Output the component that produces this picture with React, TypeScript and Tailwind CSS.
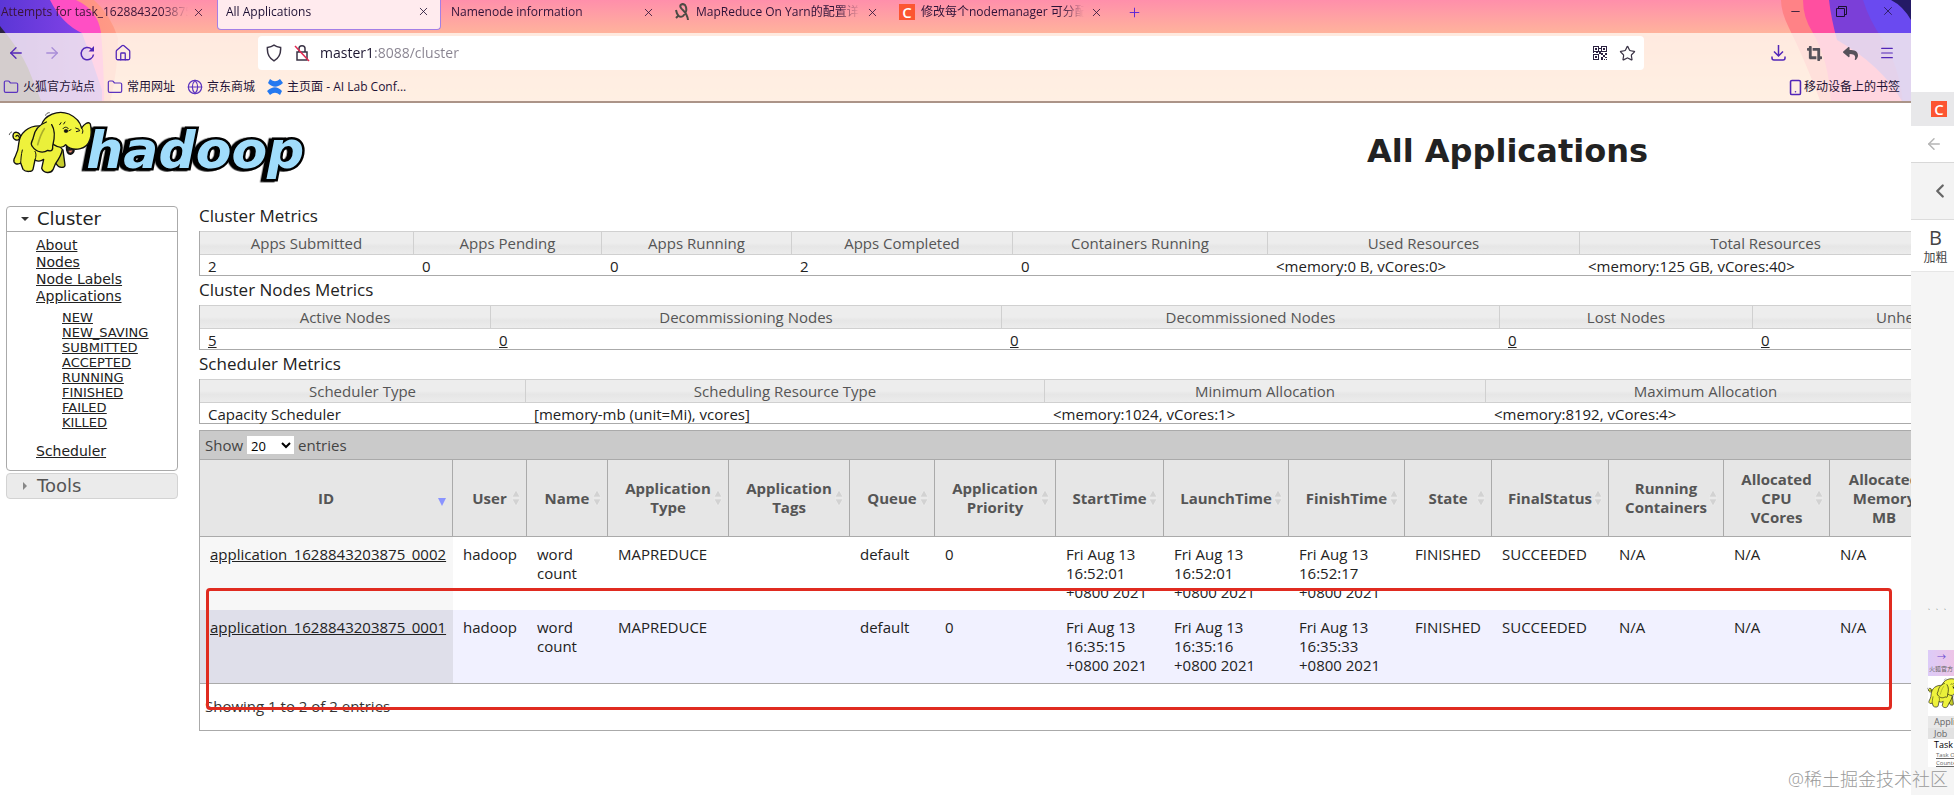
import React from 'react';
import { ArrowLeft, ArrowRight, ChevronLeft, Folder, Globe, House, Menu, Minus, Plus, Smartphone, Star, X } from 'lucide-react';
import { FaCropAlt, FaReply } from 'react-icons/fa';

interface MetricColumn {
  label: string;
  value: string;
  width: number;
  link?: boolean;
}

interface AppColumn {
  label: string;
  width: number;
  sorted?: boolean;
}

const clusterMetrics: MetricColumn[] = [
  { label: 'Apps Submitted', value: '2', width: 214 },
  { label: 'Apps Pending', value: '0', width: 188 },
  { label: 'Apps Running', value: '0', width: 190 },
  { label: 'Apps Completed', value: '2', width: 221 },
  { label: 'Containers Running', value: '0', width: 255 },
  { label: 'Used Resources', value: '<memory:0 B, vCores:0>', width: 312 },
  { label: 'Total Resources', value: '<memory:125 GB, vCores:40>', width: 372 },
];

const nodeMetrics: MetricColumn[] = [
  { label: 'Active Nodes', value: '5', width: 291, link: true },
  { label: 'Decommissioning Nodes', value: '0', width: 511, link: true },
  { label: 'Decommissioned Nodes', value: '0', width: 498, link: true },
  { label: 'Lost Nodes', value: '0', width: 253, link: true },
  { label: 'Unhealthy Nodes', value: '0', width: 368, link: true },
];

const schedulerMetrics: MetricColumn[] = [
  { label: 'Scheduler Type', value: 'Capacity Scheduler', width: 326 },
  { label: 'Scheduling Resource Type', value: '[memory-mb (unit=Mi), vcores]', width: 519 },
  { label: 'Minimum Allocation', value: '<memory:1024, vCores:1>', width: 441 },
  { label: 'Maximum Allocation', value: '<memory:8192, vCores:4>', width: 440 },
];

const appColumns: AppColumn[] = [
  { label: 'ID', width: 253, sorted: true },
  { label: 'User', width: 74 },
  { label: 'Name', width: 81 },
  { label: 'Application Type', width: 121 },
  { label: 'Application Tags', width: 121 },
  { label: 'Queue', width: 85 },
  { label: 'Application Priority', width: 121 },
  { label: 'StartTime', width: 108 },
  { label: 'LaunchTime', width: 125 },
  { label: 'FinishTime', width: 116 },
  { label: 'State', width: 87 },
  { label: 'FinalStatus', width: 117 },
  { label: 'Running Containers', width: 115 },
  { label: 'Allocated CPU VCores', width: 106 },
  { label: 'Allocated Memory MB', width: 109 },
];

const appRows: string[][] = [
  [
    'application_1628843203875_0002', 'hadoop', 'word count', 'MAPREDUCE', '', 'default', '0',
    'Fri Aug 13 16:52:01 +0800 2021', 'Fri Aug 13 16:52:01 +0800 2021', 'Fri Aug 13 16:52:17 +0800 2021',
    'FINISHED', 'SUCCEEDED', 'N/A', 'N/A', 'N/A',
  ],
  [
    'application_1628843203875_0001', 'hadoop', 'word count', 'MAPREDUCE', '', 'default', '0',
    'Fri Aug 13 16:35:15 +0800 2021', 'Fri Aug 13 16:35:16 +0800 2021', 'Fri Aug 13 16:35:33 +0800 2021',
    'FINISHED', 'SUCCEEDED', 'N/A', 'N/A', 'N/A',
  ],
];

const appStates = ['NEW', 'NEW_SAVING', 'SUBMITTED', 'ACCEPTED', 'RUNNING', 'FINISHED', 'FAILED', 'KILLED'];

const Elephant = () => (
  <g stroke="#111" strokeWidth="4" strokeLinejoin="round" strokeLinecap="round">
    <path d="M62 112C58 94 40 92 38 106C37 118 50 124 57 117C60 110 50 102 47 109" fill="#edf23c" />
    <path d="M27 104C28 99 31 97 34 96M136 46C137 41 141 38 147 38" fill="none" strokeWidth="2" />
    <path d="M150 140L168 192C176 206 192 204 194 196L188 150Z" fill="#c6cc2c" />
    <path
      d="M122 78C84 76 58 98 55 132C54 158 45 166 41 178C38 190 50 196 61 189L68 208C76 217 96 216 98 208L104 180C114 186 122 184 130 178L124 205C130 221 152 221 158 209L166 190C176 176 184 162 186 148Z"
      fill="#eef23c"
    />
    <path d="M66 150C62 165 62 178 61 189M104 180C108 168 108 160 104 154" fill="none" strokeWidth="3" />
    <path d="M198 140C198 150 200 162 211 163C220 160 222 152 221 146Z" fill="#222" />
    <path d="M204 152C206 160 214 160 217 151Z" fill="#f28a70" strokeWidth="1" />
    <path
      d="M124 74C132 46 172 28 206 42C232 54 240 68 244 84C250 74 264 62 270 72C277 104 270 140 240 146C222 150 206 146 196 134C188 146 172 142 160 134Z"
      fill="#f2f63e"
    />
    <path d="M244 84C248 90 249 94 246 100" fill="none" strokeWidth="3" />
    <path
      d="M138 66C112 76 102 94 99 112C98 122 88 128 95 138C110 161 132 158 142 151C156 156 158 148 157 138C164 112 166 92 154 74"
      fill="#eaf03a"
    />
    <path d="M132 86C122 100 116 120 112 134" fill="none" stroke="#a9ae2a" strokeWidth="5" />
    <path d="M188 86C192 80 200 80 204 86M206 92L212 89M226 84L236 88M228 95L238 92M178 74L182 68M190 72L194 66" fill="none" strokeWidth="3" />
    <ellipse cx="197" cy="93" rx="6" ry="5" fill="#111" strokeWidth="1" />
  </g>
);

const HadoopLogo = () => (
  <svg viewBox="20 12 912 240" className="h-20 w-[304px] shrink-0" role="img" aria-label="hadoop">
    <text
      x="258"
      y="204"
      fontFamily="DejaVu Sans"
      fontWeight="bold"
      fontStyle="italic"
      fontSize="156"
      fill="#a0dcfb"
      stroke="#000"
      strokeWidth="15"
      strokeLinejoin="miter"
      className="drop-shadow-[-10px_2px_0_#000] [paint-order:stroke]"
    >
      hadoop
    </text>
    <Elephant />
  </svg>
);

const ChromeBackdrop = () => (
  <div className="absolute inset-0 overflow-hidden bg-[linear-gradient(#ff8fab_0,#ffb39c_33px,#ffcfae_103px)]">
    <svg className="absolute top-0 left-0" width="160" height="103" aria-hidden="true">
      <defs>
        <linearGradient id="violet" x1="0" y1="0" x2="1" y2="0">
          <stop offset="0" stopColor="#5b36d6" />
          <stop offset="1" stopColor="#8b45ea" />
        </linearGradient>
        <linearGradient id="orange" x1="0" y1="0" x2="1" y2="0">
          <stop offset="0" stopColor="#ff7a80" />
          <stop offset="1" stopColor="#ff9c86" />
        </linearGradient>
      </defs>
      <path d="M0 0H94Q110 14 118 38Q118 70 110 103H0Z" fill="url(#orange)" />
      <path d="M0 0H76Q98 10 101 33Q104 66 104 103H0Z" fill="#ff4fc4" />
      <path d="M0 0H50Q62 24 82 33Q92 60 102 90V103H0Z" fill="url(#violet)" />
      <path d="M0 26Q20 50 28 68L42 103H0Z" fill="#2c2340" />
    </svg>
    <svg className="absolute top-0 right-0" width="140" height="103" aria-hidden="true">
      <path d="M10 0H140V103H50Q34 60 18 28Q10 12 10 0Z" fill="#ff8286" />
      <path d="M32 0H140V103H60Q58 60 42 33Q32 18 32 0Z" fill="#ff4fa0" />
      <path d="M58 0H140V103H132Q112 66 66 40Q60 18 58 0Z" fill="#7b3fd8" />
      <path d="M92 0H140V103H132Q128 66 112 40Q98 20 92 0Z" fill="#6a4af0" />
      <path d="M120 0H140V20Q132 6 120 0Z" fill="#241a66" />
    </svg>
    <div className="relative mt-[33px] h-[68px] bg-[#fff7f0]/80" />
  </div>
);

interface TabProps {
  title: string;
  icon?: React.ReactNode;
  active?: boolean;
  first?: boolean;
}

const BrowserTab: React.FC<TabProps> = ({ title, icon, active, first }) => (
  <div
    className={
      active
        ? 'flex h-[30px] w-56 items-center gap-2 rounded-b border border-t-0 border-[#a37fe6] bg-[#ffebee] pr-2.5 pb-1.5 pl-2 text-[#1c0f33]'
        : first
          ? 'flex h-6 w-[217px] items-center gap-1 pr-3 pl-px text-[#3a1437]'
          : 'flex h-6 w-56 items-center gap-1.5 pr-2.5 pl-2.5 text-[#2d1238]'
    }
  >
    {icon}
    <span className="min-w-0 flex-1 overflow-hidden whitespace-nowrap [mask-image:linear-gradient(90deg,#000_86%,transparent)]">
      {title}
    </span>
    <button type="button" aria-label="Close tab">
      <X size={13} strokeWidth={1.5} />
    </button>
  </div>
);

const CsdnIcon = () => (
  <span className="flex size-4 shrink-0 items-center justify-center bg-[#fc5531] text-[15px] leading-4 font-semibold text-white">C</span>
);

const QrIcon = () => (
  <svg width="14" height="14" viewBox="0 0 14 14" fill="#2b2140" shapeRendering="crispEdges" aria-hidden="true">
    <path fillRule="evenodd" d="M0 0h6v6H0zM1 1v4h4V1zM8 0h6v6H8zM9 1v4h4V1zM0 8h6v6H0zM1 9v4h4V9z" />
    <path d="M2 2h2v2H2zM10 2h2v2h-2zM2 10h2v2H2zM6 2h2v1H6zM6 5h2v3H6zM8 7h2v2H8zM12 7h2v2h-2zM10 9h2v2h-2zM8 11h2v3H8zM12 11h2v1h-2zM11 13h1v1h-1zM13 13h1v1h-1zM0 6h1v1H0zM3 6h2v1H3z" />
  </svg>
);

const BrowserChrome = () => (
  <header className="relative border-b-2 border-[#ab9488] text-xs">
    <ChromeBackdrop />
    <div className="relative flex h-[33px] items-start">
      <BrowserTab first title="Attempts for task_1628843203875" />
      <BrowserTab active title="All Applications" />
      <BrowserTab title="Namenode information" />
      <BrowserTab
        title="MapReduce On Yarn的配置详"
        icon={
          <svg width="15" height="18" viewBox="0 0 15 18" fill="none" stroke="#4d4a44" strokeWidth="2" aria-hidden="true">
            <path d="M1 7C2 13 5 15 8 13C12 10 12 5 10 2C7 0 4 2 6 5C8 8 12 9 13 17M4 12L1 15" />
          </svg>
        }
      />
      <BrowserTab title="修改每个nodemanager 可分配" icon={<CsdnIcon />} />
      <button type="button" aria-label="New tab" className="ml-3.5 flex h-6 items-center text-[#5a24d6]">
        <Plus size={15} strokeWidth={1.5} />
      </button>
      <div className="mr-4 ml-auto flex h-[22px] items-center gap-[34px] text-[#1a1030]">
        <button type="button" aria-label="Minimize"><Minus size={13} strokeWidth={1.5} /></button>
        <button type="button" aria-label="Restore">
          <svg width="11" height="11" viewBox="0 0 11 11" fill="none" stroke="currentColor" aria-hidden="true">
            <path d="M.5 2.5h8v8h-8zM2.5 2.5v-2h8v8h-2" />
          </svg>
        </button>
        <button type="button" aria-label="Close"><X size={14} strokeWidth={1.2} /></button>
      </div>
    </div>

    <div className="relative flex h-10 items-center pr-4 pl-[7px] text-[#5226b8]">
      <div className="flex w-[251px] items-center gap-[18px]">
        <button type="button" aria-label="Back"><ArrowLeft size={18} strokeWidth={1.7} /></button>
        <button type="button" aria-label="Forward" className="opacity-40"><ArrowRight size={18} strokeWidth={1.7} /></button>
        <button type="button" aria-label="Reload">
          <svg width="17" height="17" viewBox="0 0 17 17" fill="none" stroke="currentColor" strokeWidth="1.5" aria-hidden="true">
            <path d="M14.5 9.5A6.2 6.2 0 1 1 12.5 4" />
            <path d="M15 1v5.5H9.5z" fill="currentColor" stroke="none" />
          </svg>
        </button>
        <button type="button" aria-label="Home"><House size={18} strokeWidth={1.7} /></button>
      </div>
      <div className="flex h-[34px] flex-1 items-center rounded bg-white pr-2 pl-2 text-[#3a3345]">
        <svg width="16" height="18" viewBox="0 0 16 18" fill="none" stroke="currentColor" strokeWidth="1.5" aria-hidden="true">
          <path d="M8 1.2C10 2.6 12.4 3.2 14.6 3.4C15 9 13 14 8 16.8C3 14 1 9 1.4 3.4C3.6 3.2 6 2.6 8 1.2Z" />
        </svg>
        <svg className="ml-3" width="16" height="18" viewBox="0 0 16 18" fill="none" stroke="currentColor" strokeWidth="1.5" aria-hidden="true">
          <path d="M3 8h10v8H3zM5 8V4.500C5 .8 11 .8 11 4.500V8" />
          <path d="M1 2L15 17" stroke="#e22850" />
        </svg>
        <input
          type="text"
          aria-label="Address"
          defaultValue="master1:8088/cluster"
          className="ml-2.5 min-w-0 flex-1 bg-[linear-gradient(90deg,#1c1530_54px,#87828f_54px)] bg-clip-text text-sm text-transparent outline-none"
        />
        <button type="button" aria-label="QR code"><QrIcon /></button>
        <button type="button" aria-label="Bookmark" className="ml-3"><Star size={17} strokeWidth={1.7} /></button>
      </div>
      <div className="ml-[127px] flex items-center gap-[21px]">
        <button type="button" aria-label="Downloads">
          <svg width="15" height="16" viewBox="0 0 15 16" fill="none" stroke="currentColor" strokeWidth="1.5" aria-hidden="true">
            <path d="M7.500 0V11M3 6.500L7.500 11L12 6.500M1 11.500V13Q1 15 3 15H12Q14 15 14 13V11.500" />
          </svg>
        </button>
        <button type="button" aria-label="Crop"><FaCropAlt size={15} color="#55515a" /></button>
        <button type="button" aria-label="Undo"><FaReply size={15} color="#55515a" /></button>
        <button type="button" aria-label="Menu"><Menu size={16} strokeWidth={1.8} /></button>
      </div>
    </div>

    <nav className="relative flex h-7 items-center gap-3 pr-[11px] pl-[3px] text-[#1e1236]">
      <a href="#official" className="flex items-center gap-1"><Folder size={16} strokeWidth={1.8} color="#5b33bf" />火狐官方站点</a>
      <a href="#common" className="flex items-center gap-1"><Folder size={16} strokeWidth={1.8} color="#5b33bf" />常用网址</a>
      <a href="#jd" className="flex items-center gap-1"><Globe size={16} strokeWidth={1.8} color="#5b33bf" />京东商城</a>
      <a href="#lab" className="flex items-center gap-1">
        <svg width="16" height="16" viewBox="0 0 16 16" fill="#2479f0" aria-hidden="true">
          <path d="M1 4L3 0C7 3 9 3 13 0L16 4C10 9 6 9 1 4Z" />
          <path d="M15 12L13 16C9 13 7 13 3 16L0 12C6 7 10 7 15 12Z" />
        </svg>
        主页面 - AI Lab Conf...
      </a>
      <a href="#mobile" className="ml-auto flex items-center"><Smartphone size={17} strokeWidth={2.2} color="#5226b8" />移动设备上的书签</a>
    </nav>
  </header>
);

const Sidebar = () => (
  <aside className="w-[172px] shrink-0 font-['DejaVu_Sans',sans-serif] text-[#222]">
    <div className="rounded border border-[#aaa] bg-white">
      <h3 className="flex h-[25px] items-center gap-2 border-b border-[#aaa] pl-3.5 text-lg">
        <svg width="8" height="4" viewBox="0 0 8 4" fill="#333" aria-hidden="true"><path d="M0 0h8L4 4z" /></svg>
        Cluster
      </h3>
      <ul className="pt-[5px] pb-2.5 pl-[29px] text-sm leading-[17px] underline">
        <li><a href="#about">About</a></li>
        <li><a href="#nodes">Nodes</a></li>
        <li><a href="#nodelabels">Node Labels</a></li>
        <li>
          <a href="#apps">Applications</a>
          <ul className="mt-[5px] mb-[13px] pl-[26px] text-[13px] leading-[15px] underline">
            {appStates.map(state => (
              <li key={state}><a href={`#apps/${state}`}>{state}</a></li>
            ))}
          </ul>
        </li>
        <li><a href="#scheduler">Scheduler</a></li>
      </ul>
    </div>
    <h3 className="mt-0.5 flex h-[26px] items-center gap-2.5 rounded border border-[#d3d3d3] bg-[#ebebeb] pl-4 text-lg text-[#555]">
      <svg width="4" height="8" viewBox="0 0 4 8" fill="#888" aria-hidden="true"><path d="M0 0v8l4-4z" /></svg>
      Tools
    </h3>
  </aside>
);

const MetricsTable: React.FC<{ title: string; columns: MetricColumn[] }> = ({ title, columns }) => (
  <section>
    <h3 className="h-[29px] text-[17px] leading-7 text-[#222]">{title}</h3>
    <table className="w-max table-fixed border-separate border-spacing-0 border-b border-l border-[#aaa]">
      <colgroup>
        {columns.map(col => <col key={col.label} style={{ width: col.width }} />)}
      </colgroup>
      <thead>
        <tr>
          {columns.map(col => (
            <th
              key={col.label}
              className="h-6 border-y border-r border-[#d0d0d0] bg-[linear-gradient(#ededed_50%,#e6e6e6_65%,#ececec)] p-0 leading-5 font-normal text-[#555]"
            >
              {col.label}
            </th>
          ))}
        </tr>
      </thead>
      <tbody>
        <tr>
          {columns.map(col => (
            <td key={col.label} className="px-2 pt-0.5 pb-0 leading-[18px] text-[#222]">
              {col.link ? <a href="#nodes" className="underline">{col.value}</a> : col.value}
            </td>
          ))}
        </tr>
      </tbody>
    </table>
  </section>
);

const SortIcon = ({ sorted }: { sorted?: boolean }) => (
  <svg width="8" height="18" viewBox="0 0 8 18" aria-hidden="true" className="shrink-0">
    {sorted ? (
      <path d="M0 9h8L4 17z" fill="#8a94ff" />
    ) : (
      <path d="M4 1L8 8H0zM4 17L0 10h8z" fill="#d2d2d2" stroke="#f2f2f2" strokeWidth=".5" />
    )}
  </svg>
);

const ApplicationsTable = () => (
  <section className="mt-1.5 w-max min-w-full border-y border-l border-[#aaa] text-[#222]">
    <div className="flex h-7 items-center gap-1 bg-[#cacaca] pl-[5px] text-[#444]">
      <label htmlFor="length">Show</label>
      <select id="length" defaultValue="20" className="h-[18px] w-[47px] bg-white text-[13px] text-black">
        <option>20</option>
        <option>50</option>
        <option>100</option>
      </select>
      <span>entries</span>
    </div>
    <table className="w-max table-fixed border-separate border-spacing-0 leading-[19px]">
      <colgroup>
        {appColumns.map(col => <col key={col.label} style={{ width: col.width }} />)}
      </colgroup>
      <thead>
        <tr>
          {appColumns.map(col => (
            <th key={col.label} className="h-[78px] border-y border-r border-[#aaa] bg-[#e6e6e6] px-1.5 py-0 font-bold text-[#555]">
              <div className="flex items-center">
                <span className="flex-1 pl-2 text-center">{col.label}</span>
                <SortIcon sorted={col.sorted} />
              </div>
            </th>
          ))}
        </tr>
      </thead>
      <tbody>
        {appRows.map((row, rowIdx) => (
          <tr key={row[0]} className={rowIdx % 2 ? 'bg-[#f1f1ff]' : 'bg-white'}>
            {row.map((cell, idx) => (
              <td
                key={idx}
                className={
                  idx > 0
                    ? 'px-2.5 py-2 align-top'
                    : rowIdx % 2
                      ? 'bg-[#dfdfea] py-2 pr-1.5 pl-2.5 align-top'
                      : 'bg-[#f7f7f7] py-2 pr-1.5 pl-2.5 align-top'
                }
              >
                {idx === 0 ? <a href={`#${cell}`} className="underline">{cell}</a> : cell}
              </td>
            ))}
          </tr>
        ))}
      </tbody>
    </table>
    <div className="flex h-[47px] items-center border-t border-[#aaa] pb-0.5 pl-[5px] text-[#333]">Showing 1 to 2 of 2 entries</div>
  </section>
);

// Narrow slice of the editor window that sits behind the browser
const BackgroundWindow = () => (
  <aside className="flex w-[43px] shrink-0 flex-col overflow-hidden bg-[#f5f5f5] text-[#444]">
    <div className="h-[92px] shrink-0 bg-white" />
    <div className="flex h-[34px] shrink-0 items-center bg-[#e8e8ea] pl-5"><CsdnIcon /></div>
    <div className="flex h-[37px] shrink-0 items-center border-b border-[#d8d8d8] bg-white pl-3.5">
      <ArrowLeft size={18} color="#b5b5b5" />
    </div>
    <div className="flex h-[57px] shrink-0 items-center border-b border-[#dcdcdc] bg-[#f3f3f3] pl-[18px]">
      <ChevronLeft size={22} strokeWidth={2.5} color="#666" />
    </div>
    <div className="flex h-[52px] shrink-0 flex-col items-center border-b border-[#e6e6e6] bg-white pt-1.5 pl-1.5">
      <span className="text-xl leading-6">B</span>
      <span className="text-xs leading-4">加粗</span>
    </div>
    <div className="mt-[327px] ml-[17px] flex h-4 gap-[3px] text-[5px] leading-4 text-[#888]">
      <span>、</span><span>、</span><span>、</span>
    </div>
    <div className="mt-[35px] ml-[17px] w-40 bg-white text-[9px] text-[#666]">
      <div className="h-[26px] overflow-hidden bg-[linear-gradient(90deg,#dccbf8,#f0c4e4_30px)] pl-px leading-[13px] whitespace-nowrap">
        <div className="pl-2 text-[#6a4ad0]">→</div>
        <div className="text-[6px]">火狐官方</div>
      </div>
      <svg viewBox="30 20 260 250" className="-ml-px h-10 w-[42px]" aria-hidden="true"><Elephant /></svg>
      <div className="h-3 bg-[#e8e8e8] pl-1.5 leading-3">Appli</div>
      <div className="h-[11px] bg-[#e2e2e2] pl-1.5 leading-[11px]">Job</div>
      <div className="h-3 pl-1.5 leading-3 text-black">Task</div>
      <div className="pl-2 text-[6px] leading-2 underline">Task O<br />Counte</div>
    </div>
  </aside>
);

const App = () => (
  <div className="relative flex min-h-screen overflow-hidden bg-white font-['Open_Sans','Noto_Sans_CJK_SC',sans-serif] text-[15px]">
    <div className="min-w-0 flex-1 overflow-hidden">
      <BrowserChrome />
      <div className="flex h-[99px] items-start justify-between pt-px pr-[263px] pl-[7px]">
        <HadoopLogo />
        <h1 className="pt-6 font-['DejaVu_Sans',sans-serif] text-[32px] leading-[46px] font-bold text-[#222]">All Applications</h1>
      </div>
      <div className="flex items-start gap-[21px] pl-1.5">
        <div className="pt-1"><Sidebar /></div>
        <main className="min-w-0 flex-1">
          <MetricsTable title="Cluster Metrics" columns={clusterMetrics} />
          <MetricsTable title="Cluster Nodes Metrics" columns={nodeMetrics} />
          <MetricsTable title="Scheduler Metrics" columns={schedulerMetrics} />
          <div className="relative">
            <ApplicationsTable />
            <div className="pointer-events-none absolute right-[19px] bottom-[21px] left-[7px] h-[122px] rounded-sm border-3 border-[#e02b20]" />
          </div>
        </main>
      </div>
    </div>
    <BackgroundWindow />
    <div className="absolute right-1.5 bottom-1 text-lg leading-6 font-light text-[#9a9a9a]">@稀土掘金技术社区</div>
  </div>
);

export default App;
